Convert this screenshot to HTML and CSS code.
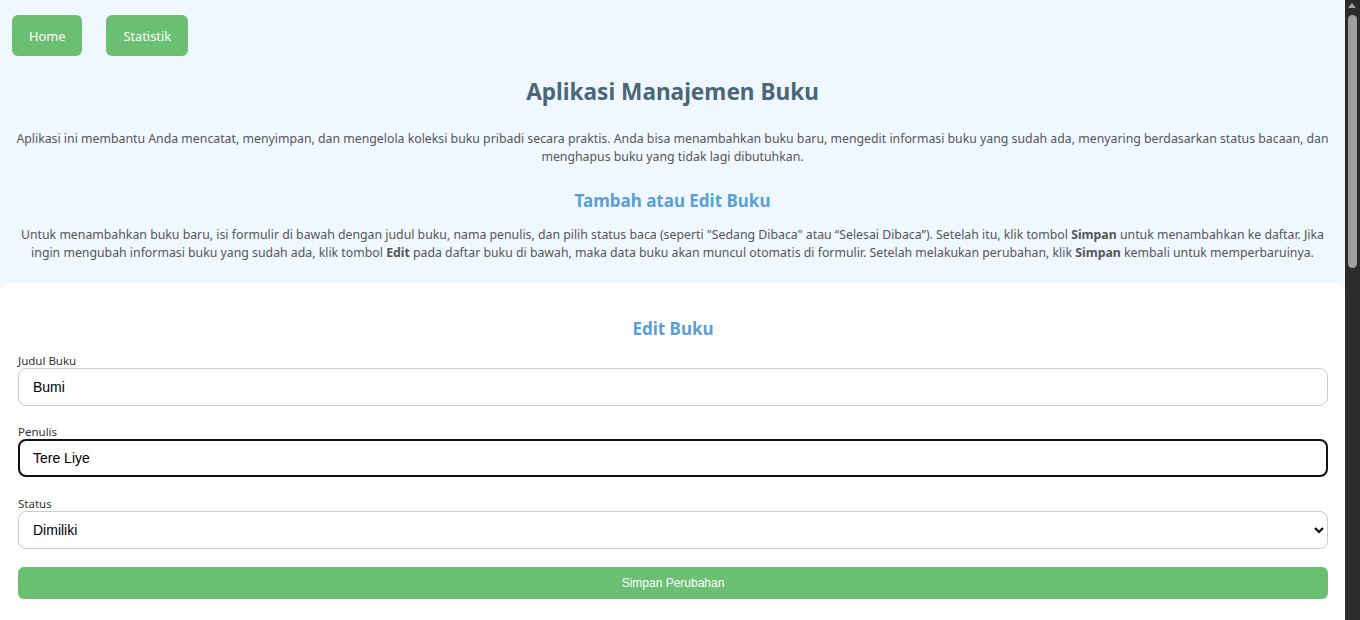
FILE: index.html
```html
<!DOCTYPE html>
<html lang="id">
<head>
<meta charset="utf-8">
<title>Aplikasi Manajemen Buku</title>
<link rel="stylesheet" href="styles.css">
</head>
<body>
<div class="page">
  <nav class="nav">
    <a class="nav-btn" href="#">Home</a>
    <a class="nav-btn" href="#">Statistik</a>
  </nav>
  <header class="intro">
    <h1 class="title">Aplikasi Manajemen Buku</h1>
    <p class="desc">Aplikasi ini membantu Anda mencatat, menyimpan, dan mengelola koleksi buku pribadi secara praktis. Anda bisa menambahkan buku baru, mengedit informasi buku yang sudah ada, menyaring berdasarkan status bacaan, dan menghapus buku yang tidak lagi dibutuhkan.</p>
    <h2 class="subtitle">Tambah atau Edit Buku</h2>
    <p class="desc">Untuk menambahkan buku baru, isi formulir di bawah dengan judul buku, nama penulis, dan pilih status baca (seperti "Sedang Dibaca" atau “Selesai Dibaca”). Setelah itu, klik tombol <b>Simpan</b> untuk menambahkan ke daftar. Jika ingin mengubah informasi buku yang sudah ada, klik tombol <b>Edit</b> pada daftar buku di bawah, maka data buku akan muncul otomatis di formulir. Setelah melakukan perubahan, klik <b>Simpan</b> kembali untuk memperbaruinya.</p>
  </header>
  <main class="card">
    <h2 class="card-title">Edit Buku</h2>
    <form class="form">
      <div class="field">
        <label class="label" for="judul">Judul Buku</label>
        <input class="input" id="judul" type="text" value="Bumi">
      </div>
      <div class="field">
        <label class="label" for="penulis">Penulis</label>
        <input class="input is-focused" id="penulis" type="text" value="Tere Liye">
      </div>
      <div class="field field-last">
        <label class="label" for="status">Status</label>
        <select class="input select" id="status">
          <option>Dimiliki</option>
          <option>Sedang Dibaca</option>
          <option>Selesai Dibaca</option>
        </select>
      </div>
      <button class="submit" type="button">Simpan Perubahan</button>
    </form>
  </main>
</div>
<div class="scrollbar" aria-hidden="true">
  <span class="scroll-arrow"></span>
  <span class="scroll-thumb"></span>
</div>
</body>
</html>
```
FILE: styles.css
```css
html, body {
  margin: 0;
  background: #f0f8ff;
  overflow: hidden;
}
body {
  font-family: "Noto Sans", "Open Sans", sans-serif;
  color: #555;
}
.page {
  margin-right: 15px;
}
.nav {
  display: flex;
  gap: 24px;
  padding: 15px 12px 0;
}
.nav-btn {
  display: flex;
  align-items: center;
  height: 41px;
  padding: 0 17px;
  background: #6abf72;
  color: #fff;
  text-decoration: none;
  border-radius: 6px;
  font-size: 12.8px;
}
.intro {
  text-align: center;
  padding: 0 15px;
}
.title {
  margin: 21px 0 0;
  font-size: 22.6px;
  line-height: 30px;
  color: #4a6678;
}
.desc {
  margin: 0;
  font-size: 12.3px;
  line-height: 18px;
}
.intro .title + .desc {
  margin-top: 23px;
}
.subtitle {
  margin: 24px 0 14px;
  font-size: 17px;
  line-height: 22px;
  color: #5a9fd6;
}
.card {
  margin-top: 21px;
  background: #fff;
  border-radius: 10px;
  padding: 35px 17px 40px 18px;
}
.card-title {
  margin: 0 0 13px;
  text-align: center;
  font-size: 17px;
  line-height: 22px;
  color: #5a9fd6;
}
.form {
  display: flex;
  flex-direction: column;
}
.field {
  display: flex;
  flex-direction: column;
  margin-bottom: 18px;
}
.field-last {
  margin-top: 1px;
}
.label {
  font-size: 11.5px;
  line-height: 15px;
  color: #333;
}
.input {
  box-sizing: border-box;
  height: 38px;
  border: 1px solid #ccc;
  border-radius: 8px;
  padding: 0 14px;
  font-family: "Liberation Sans", Arial, sans-serif;
  font-size: 14px;
  color: #000;
  background: #fff;
  outline: none;
}
.input.is-focused {
  border: 2px solid #111;
  padding: 0 13px;
}
.select {
  padding: 0 10px;
}
.submit {
  height: 32px;
  border: none;
  border-radius: 6px;
  background: #6abf72;
  color: #fff;
  font-family: "Liberation Sans", Arial, sans-serif;
  font-size: 12px;
  cursor: pointer;
}
.scrollbar {
  position: fixed;
  top: 0;
  right: 0;
  width: 15px;
  height: 100vh;
  background: #2b2b2b;
}
.scroll-arrow {
  position: absolute;
  top: 3px;
  left: 3px;
  width: 0;
  height: 0;
  border-left: 4.5px solid transparent;
  border-right: 4.5px solid transparent;
  border-bottom: 5px solid #9f9f9f;
}
.scroll-thumb {
  position: absolute;
  top: 15px;
  left: 3px;
  width: 9px;
  height: 253px;
  border-radius: 5px;
  background: #9f9f9f;
}
```
